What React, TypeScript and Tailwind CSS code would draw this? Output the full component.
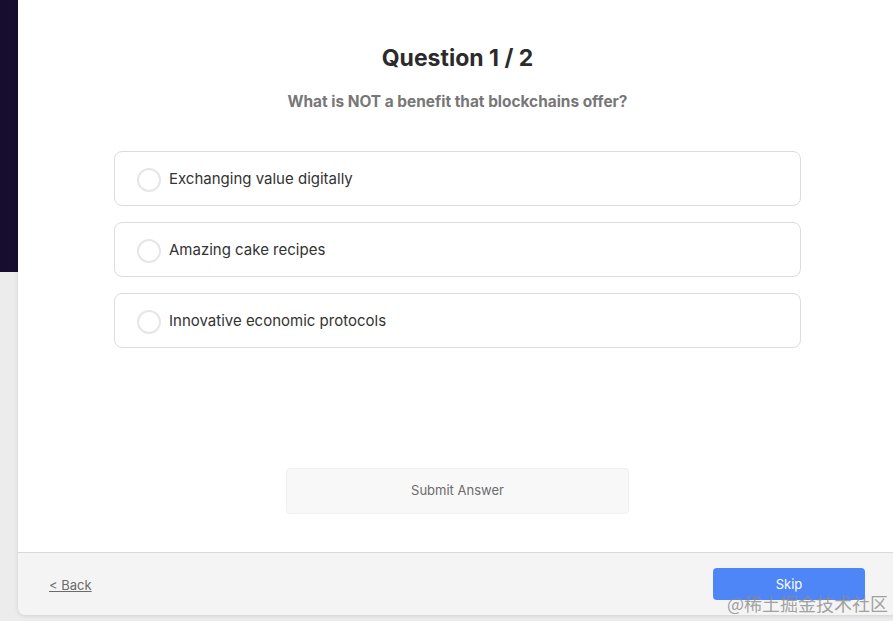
import React, { useState } from "react";

// Data
const options = [
  "Exchanging value digitally",
  "Amazing cake recipes",
  "Innovative economic protocols",
];

// Componente
const App: React.FC = () => {
  const [selected, setSelected] = useState<number | null>(null);

  return (
    <div
      className="relative h-[621px] w-[893px] overflow-hidden bg-[linear-gradient(to_bottom,#170d2f_272px,#ececec_272px)]"
      style={{ fontFamily: "Inter, 'Noto Sans', sans-serif" }}
    >
      <div className="ml-[18px] flex h-[615px] w-[879px] flex-col rounded-b-lg bg-white shadow-[0_1px_4px_rgba(0,0,0,0.12)]">
        <div className="flex flex-1 flex-col items-center pt-[42px]">
          <h1 className="text-[23px] leading-8 font-bold text-[#2b2b2b]">
            Question 1 / 2
          </h1>
          <p className="mt-[18px] text-[15.4px] leading-5 font-bold text-[#777777]">
            What is NOT a benefit that blockchains offer?
          </p>

          <div className="mt-[39px] flex w-[687px] flex-col gap-[16px]">
            {options.map((option, i) => (
              <button
                key={option}
                onClick={() => setSelected(i)}
                className="flex h-[55px] items-center rounded-lg border border-[#dcdcdc] bg-white pt-[2px] pl-[22px] text-left"
              >
                <span
                  className={
                    selected === i
                      ? "h-6 w-6 rounded-full border-[7px] border-[#4f86f7]"
                      : "h-6 w-6 rounded-full border-2 border-[#e6e6e6]"
                  }
                />
                <span className="ml-[8px] text-[15px] text-[#333333]">
                  {option}
                </span>
              </button>
            ))}
          </div>

          <button className="mt-[120px] h-[46px] w-[343px] rounded-sm border border-[#f0f0f0] bg-[#f8f8f8] text-[13px] text-[#6b6b6b]">
            Submit Answer
          </button>
        </div>

        <div className="flex h-[63px] items-center justify-between rounded-b-lg border-t border-[#d9d9d9] bg-[#f4f4f4] pr-[32px] pl-[31px]">
          <a href="#" className="pt-[4px] text-[13px] text-[#6b6b6b] underline">
            &lt; Back
          </a>
          <button className="h-[32px] w-[152px] rounded-sm bg-[#4f86f7] pt-[1px] text-[13px] text-white">
            Skip
          </button>
        </div>
      </div>

      <span
        className="absolute top-[593px] left-[727px] text-[18px] leading-5 text-[#8a8a8a]/80"
        style={{ fontFamily: "'Noto Sans CJK SC', sans-serif" }}
      >
        @稀土掘金技术社区
      </span>
    </div>
  );
};

export default App;
